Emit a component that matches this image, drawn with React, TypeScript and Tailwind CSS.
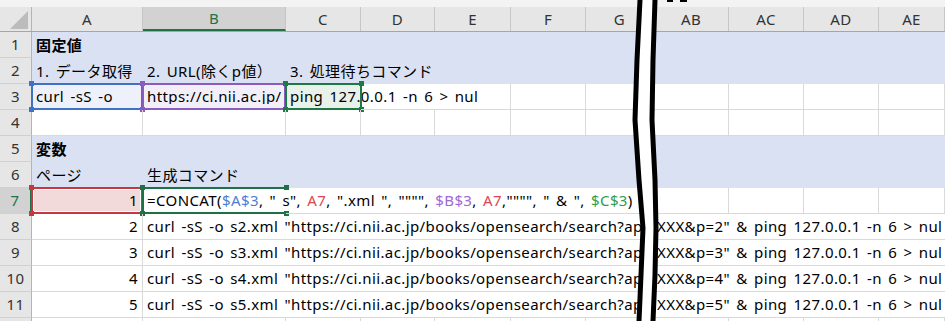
import React from 'react';

const grid = 'border-[#d9d9d9]';

function RowHead({ n, active = false }: { n: number; active?: boolean }) {
  return (
    <div
      className={
        active
          ? 'flex h-full w-[32px] shrink-0 items-center justify-center border-b border-r-2 border-b-[#d0d0d0] border-r-[#217346] bg-[#d2d2d2] text-[#217346]'
          : 'flex h-full w-[32px] shrink-0 items-center justify-center border-b border-r border-b-[#d0d0d0] border-r-[#b4b4b4] bg-[#e6e6e6] text-[#333]'
      }
    >
      {n}
    </div>
  );
}

function Cell({ w, className = '', children }: { w: string; className?: string; children?: React.ReactNode }) {
  return (
    <div className={`relative flex h-full shrink-0 items-center whitespace-nowrap border-b border-r ${grid} px-[4px] ${w} ${className}`}>
      {children}
    </div>
  );
}

function RefBox({ border, handle }: { border: string; handle: string }) {
  return (
    <div className={`pointer-events-none absolute -bottom-px -left-px -right-px -top-px border-2 ${border}`}>
      <span className={`absolute -left-[4px] -top-[4px] size-[5px] ${handle}`} />
      <span className={`absolute -right-[4px] -top-[4px] size-[5px] ${handle}`} />
      <span className={`absolute -bottom-[4px] -left-[4px] size-[5px] ${handle}`} />
      <span className={`absolute -bottom-[4px] -right-[4px] size-[5px] ${handle}`} />
    </div>
  );
}

// lavender band rows (no gridlines)
function BandRow({ n, a, b, c, bold = false }: { n: number; a?: string; b?: string; c?: string; bold?: boolean }) {
  return (
    <div className="flex h-[26px]">
      <RowHead n={n} />
      <div className={`flex w-[622px] shrink-0 items-center whitespace-nowrap bg-[#d9e1f2] ${bold ? 'font-bold' : ''}`}>
        <div className="w-[111px] shrink-0 px-[4px]">{a}</div>
        <div className="w-[143px] shrink-0 px-[4px]">{b}</div>
        <div className="w-[75px] shrink-0 px-[4px]">{c}</div>
      </div>
      <div className="flex-1 bg-[#d9e1f2]" />
    </div>
  );
}

function RightEmpty() {
  return (
    <>
      <Cell w="w-[75px]" />
      <Cell w="w-[75px]" />
      <Cell w="w-[75px]" />
      <Cell w="w-[66px]" />
    </>
  );
}

function LeftEmpty() {
  return (
    <>
      <Cell w="w-[111px]" />
      <Cell w="w-[143px]" />
      <Cell w="w-[75px]" />
      <Cell w="w-[74px]" />
      <Cell w="w-[76px]" />
      <Cell w="w-[75px]" />
      <Cell w="w-[68px]" />
    </>
  );
}

function DataRow({ n }: { n: number }) {
  return (
    <div className="flex h-[26px]">
      <RowHead n={n + 6} />
      <Cell w="w-[111px]" className="justify-end">{n}</Cell>
      <div className={`flex h-full w-[511px] shrink-0 items-center overflow-hidden whitespace-nowrap border-b ${grid} px-[4px]`}>
        curl -sS -o s{n}.xml "https://ci.nii.ac.jp/books/opensearch/search?appid=XXX&amp;p={n}" &amp; ping 127.0.0.1 -n 6 &gt; nul
      </div>
      <div className={`flex h-full flex-1 items-center overflow-hidden whitespace-nowrap border-b ${grid} pl-[3px]`}>
        XXX&amp;p={n}" &amp; ping 127.0.0.1 -n 6 &gt; nul
      </div>
    </div>
  );
}

const formula: [string, string][] = [
  ['=CONCAT(', 'text-black'],
  ['$A$3', 'text-[#4a7fd4]'],
  [', " s", ', 'text-black'],
  ['A7', 'text-[#dc4652]'],
  [', ".xml ", """", ', 'text-black'],
  ['$B$3', 'text-[#a068d6]'],
  [', ', 'text-black'],
  ['A7', 'text-[#dc4652]'],
  [',"""", " & ", ', 'text-black'],
  ['$C$3', 'text-[#2f9e4a]'],
  [')', 'text-black'],
];

function ColHead({ w, children, active = false }: { w: string; children: React.ReactNode; active?: boolean }) {
  return (
    <div
      className={
        active
          ? `flex h-full shrink-0 items-center justify-center border-b-2 border-r border-b-[#217346] border-r-[#c6c6c6] bg-[#d2d2d2] text-[#217346] ${w}`
          : `flex h-full shrink-0 items-center justify-center border-r border-[#c6c6c6] ${w}`
      }
    >
      {children}
    </div>
  );
}

function BreakMark() {
  return (
    <svg className="pointer-events-none absolute left-0 top-0" width="945" height="321" viewBox="0 0 945 321">
      <polygon
        points="640,0 637,60 635,120 639,180 643,228 641,275 639,321 654,321 655,275 656,228 655,180 652,120 653,60 654,0"
        fill="#fff"
      />
      <polyline points="640,0 637,60 635,120 639,180 643,228 641,275 639,321" fill="none" stroke="#000" strokeWidth="5" />
      <polyline points="655,0 653,60 652,120 655,180 656,228 655,275 653,321" fill="none" stroke="#000" strokeWidth="5" />
      <rect x="667" y="0" width="6" height="2" fill="#000" />
      <rect x="680" y="0" width="7" height="2" fill="#000" />
    </svg>
  );
}

export default function App() {
  return (
    <div className="relative h-[321px] w-[945px] overflow-hidden bg-white font-['Noto_Sans','Noto_Sans_CJK_JP',sans-serif] text-[15px] leading-none tracking-[0.4px] text-black [word-spacing:2px]">
      <div className="h-[7px] bg-[#f3f3f3]" />

      {/* column headers */}
      <div className="flex h-[25px] border-b border-[#a6a6a6] bg-[#e6e6e6] text-[15px] text-[#333]">
        <div className="relative w-[32px] shrink-0 border-r border-[#b4b4b4]">
          <svg className="absolute left-0 top-0" width="32" height="25">
            <polygon points="10,22 28,4 28,22" fill="#bcbcbc" />
          </svg>
        </div>
        <ColHead w="w-[111px]">A</ColHead>
        <ColHead w="w-[143px]" active>B</ColHead>
        <ColHead w="w-[75px]">C</ColHead>
        <ColHead w="w-[74px]">D</ColHead>
        <ColHead w="w-[76px]">E</ColHead>
        <ColHead w="w-[75px]">F</ColHead>
        <ColHead w="w-[68px]">G</ColHead>
        <ColHead w="w-[75px]">AB</ColHead>
        <ColHead w="w-[75px]">AC</ColHead>
        <ColHead w="w-[75px]">AD</ColHead>
        <ColHead w="w-[66px]">AE</ColHead>
      </div>

      <BandRow n={1} a="固定値" bold />
      <BandRow n={2} a="1. データ取得" b="2. URL(除くp値）" c="3. 処理待ちコマンド" />

      {/* row 3 */}
      <div className="flex h-[26px]">
        <RowHead n={3} />
        <Cell w="w-[111px]" className="bg-[#eef1fa]">
          curl -sS -o
          <RefBox border="border-[#3f72c4]" handle="bg-[#3f72c4]" />
        </Cell>
        <Cell w="w-[143px]" className="bg-[#f3eff8]">
          <div className="overflow-hidden">https://ci.nii.ac.jp/books/opensearch/search?appid=XXX&amp;p=</div>
          <RefBox border="border-[#8a5cc0]" handle="bg-[#8a5cc0]" />
        </Cell>
        <Cell w="w-[75px]" className="border-r-0 bg-[#e8f2ea]">
          ping 127.0.0.1 -n 6 &gt; nul
          <RefBox border="border-[#1e7a45]" handle="bg-[#1e7a45]" />
        </Cell>
        <Cell w="w-[74px]" className="border-r-0" />
        <Cell w="w-[76px]" />
        <Cell w="w-[75px]" />
        <Cell w="w-[68px]" />
        <RightEmpty />
      </div>

      {/* row 4 */}
      <div className="flex h-[26px]">
        <RowHead n={4} />
        <LeftEmpty />
        <RightEmpty />
      </div>

      <BandRow n={5} a="変数" bold />
      <BandRow n={6} a="ページ" b="生成コマンド" />

      {/* row 7 */}
      <div className="flex h-[26px]">
        <RowHead n={7} active />
        <Cell w="w-[111px]" className="justify-end bg-[#f2dada]">
          1
          <div className="pointer-events-none absolute -bottom-px -left-px -right-px -top-px border-2 border-[#c4393f] outline outline-1 -outline-offset-3 outline-white">
            <span className="absolute -left-[4px] -top-[4px] size-[5px] bg-[#c4393f]" />
            <span className="absolute -right-[4px] -top-[4px] size-[5px] bg-[#c4393f]" />
            <span className="absolute -bottom-[4px] -left-[4px] size-[5px] bg-[#c4393f]" />
            <span className="absolute -bottom-[4px] -right-[4px] size-[5px] bg-[#c4393f]" />
          </div>
        </Cell>
        <Cell w="w-[143px]" className="border-r-0">
          <span>
            {formula.map(([t, c], i) => (
              <span key={i} className={c}>
                {t}
              </span>
            ))}
          </span>
          <div className="pointer-events-none absolute -bottom-px -left-px -right-px -top-px border-2 border-r-0 border-[#1e7145]">
            <span className="absolute -left-[4px] -top-[4px] size-[5px] bg-[#1e7145]" />
            <span className="absolute -right-[2px] -top-[4px] size-[5px] bg-[#1e7145]" />
            <span className="absolute -bottom-[4px] -left-[4px] size-[5px] bg-[#1e7145]" />
            <span className="absolute -bottom-[4px] -right-[2px] size-[5px] bg-[#1e7145]" />
          </div>
        </Cell>
        <Cell w="w-[75px]" className="border-r-0" />
        <Cell w="w-[74px]" className="border-r-0" />
        <Cell w="w-[76px]" className="border-r-0" />
        <Cell w="w-[75px]" className="border-r-0" />
        <Cell w="w-[68px]" />
        <RightEmpty />
      </div>

      <DataRow n={2} />
      <DataRow n={3} />
      <DataRow n={4} />
      <DataRow n={5} />

      {/* row 12 */}
      <div className="flex h-[26px]">
        <RowHead n={12} />
        <LeftEmpty />
        <RightEmpty />
      </div>

      <BreakMark />
    </div>
  );
}
